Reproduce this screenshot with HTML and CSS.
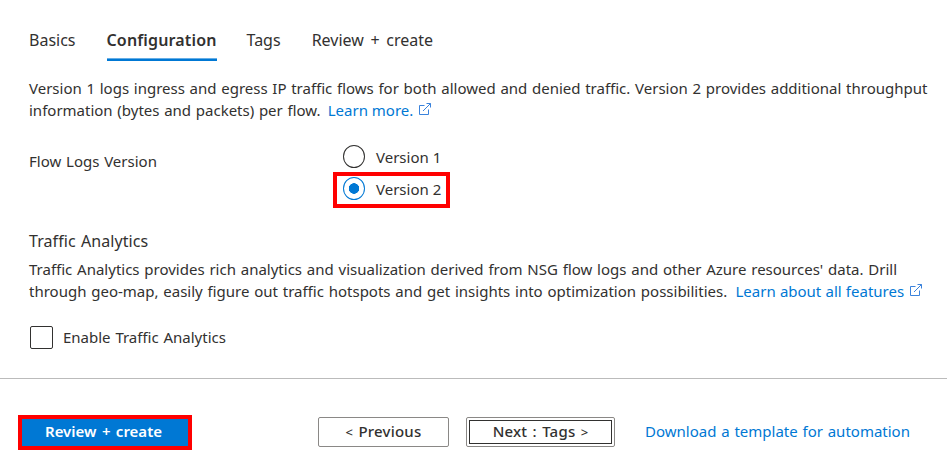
FILE: index.html
```html
<!DOCTYPE html>
<html lang="en">
<head>
<meta charset="utf-8">
<title>Create a flow log</title>
<link rel="stylesheet" href="styles.css">
</head>
<body>
<main class="content">
  <nav class="tabs">
    <a class="tab">Basics</a>
    <a class="tab tab-active">Configuration</a>
    <a class="tab">Tags</a>
    <a class="tab">Review + create</a>
  </nav>
  <p class="text intro">Version 1 logs ingress and egress IP traffic flows for both allowed and denied traffic. Version 2 provides additional throughput<br>information (bytes and packets) per flow. <a class="link more">Learn more.</a><svg class="ext" viewBox="0 0 14 14"><path d="M6.5 3.5H1.5V12.5H10.5V7.5M5 9 12.5 1.5M8.5 1.5H12.5V5.5"/></svg></p>
  <div class="field">
    <span class="label">Flow Logs Version</span>
    <div class="radios">
      <label class="option"><span class="radio"></span><span>Version 1</span></label>
      <label class="option option-marked"><span class="radio radio-on"></span><span>Version 2</span></label>
    </div>
  </div>
  <h2 class="heading">Traffic Analytics</h2>
  <p class="text">Traffic Analytics provides rich analytics and visualization derived from NSG flow logs and other Azure resources' data. Drill<br>through geo-map, easily figure out traffic hotspots and get insights into optimization possibilities. <a class="link more more-wide">Learn about all features</a><svg class="ext" viewBox="0 0 14 14"><path d="M6.5 3.5H1.5V12.5H10.5V7.5M5 9 12.5 1.5M8.5 1.5H12.5V5.5"/></svg></p>
  <label class="check"><span class="box"></span><span>Enable Traffic Analytics</span></label>
</main>
<footer class="footer">
  <button class="btn btn-primary">Review + create</button>
  <button class="btn btn-prev"><span class="arrow">&lt;</span> Previous</button>
  <button class="btn btn-next">Next : Tags <span class="arrow">&gt;</span></button>
  <a class="link download">Download a template for automation</a>
</footer>
</body>
</html>
```
FILE: styles.css
```css
* { box-sizing: border-box; }
body { margin: 0; width: 947px; height: 466px; overflow: hidden; background: #fff; color: #323130; font: 15px/22px "Noto Sans", sans-serif; word-spacing: 0.9px; }
.content { height: 378px; padding: 25px 0 0 29px; }
.tabs { display: flex; gap: 31px; height: 36px; font-size: 16px; line-height: 30px; word-spacing: 2.5px; }
.tab-active { margin-right: -1px; font-weight: 600; letter-spacing: 0.15px; box-shadow: inset 0 -2px #0078d4, inset 0 -3px #66aee6; }
.text { margin: 16px 0 0; white-space: nowrap; }
.intro { word-spacing: 0.8px; }
.link { color: #0078d4; }
.more { margin-left: 2.5px; word-spacing: 0; }
.more-wide { margin-left: 3.5px; word-spacing: 0.3px; }
.ext { width: 14px; height: 14px; margin-left: 5px; fill: none; stroke: #3b83dc; stroke-width: 1; }
.field { display: flex; margin-top: 18px; height: 69px; }
.label { width: 304px; padding-top: 11px; }
.option { display: flex; align-items: center; gap: 11px; height: 36px; width: 117px; padding-left: 6px; border: 4px solid transparent; word-spacing: 0; }
.option-marked { border-color: #f00; margin-top: -3px; padding-bottom: 2px; }
.radio { width: 22px; height: 23px; margin-top: -1px; border: 1px solid #323130; border-radius: 50%; }
.radio-on { border-color: #0078d4; background: radial-gradient(circle, #0078d4 5px, transparent 5.5px); }
.heading { margin: 22px 0 0; font-size: 16px; font-weight: 400; line-height: 22px; letter-spacing: 0.08px; }
.heading + .text { margin-top: 6px; }
.check { display: flex; align-items: center; gap: 10px; margin: 24px 0 0 1px; height: 23px; }
.check span:last-child { margin-top: -1px; }
.box { width: 23px; height: 23px; border: 1px solid #323130; border-radius: 2px; }
.footer { display: flex; align-items: flex-start; height: 88px; padding: 36px 0 0 18px; border-top: 1px solid #bbb; }
.btn { font: 500 15px/22px "Noto Sans", sans-serif; color: #323130; background: #fff; border: 1px solid #8a8886; border-radius: 2px; padding: 0 0 2px; height: 30px; white-space: nowrap; letter-spacing: 0.2px; word-spacing: 1.2px; }
.arrow { font-size: 13px; }
.btn-primary { width: 174px; height: 35px; padding: 0 3px 3px 0; border: 4px solid #f00; border-radius: 0; background: #0078d4; color: #fff; font-weight: 600; letter-spacing: 0; word-spacing: 1.5px; }
.btn-prev { width: 131px; margin: 2px 0 0 126px; }
.btn-next { width: 149px; margin: 2px 0 0 17px; outline: 1px solid #323130; outline-offset: -4px; }
.download { margin: 5px 0 0 30px; }
```
